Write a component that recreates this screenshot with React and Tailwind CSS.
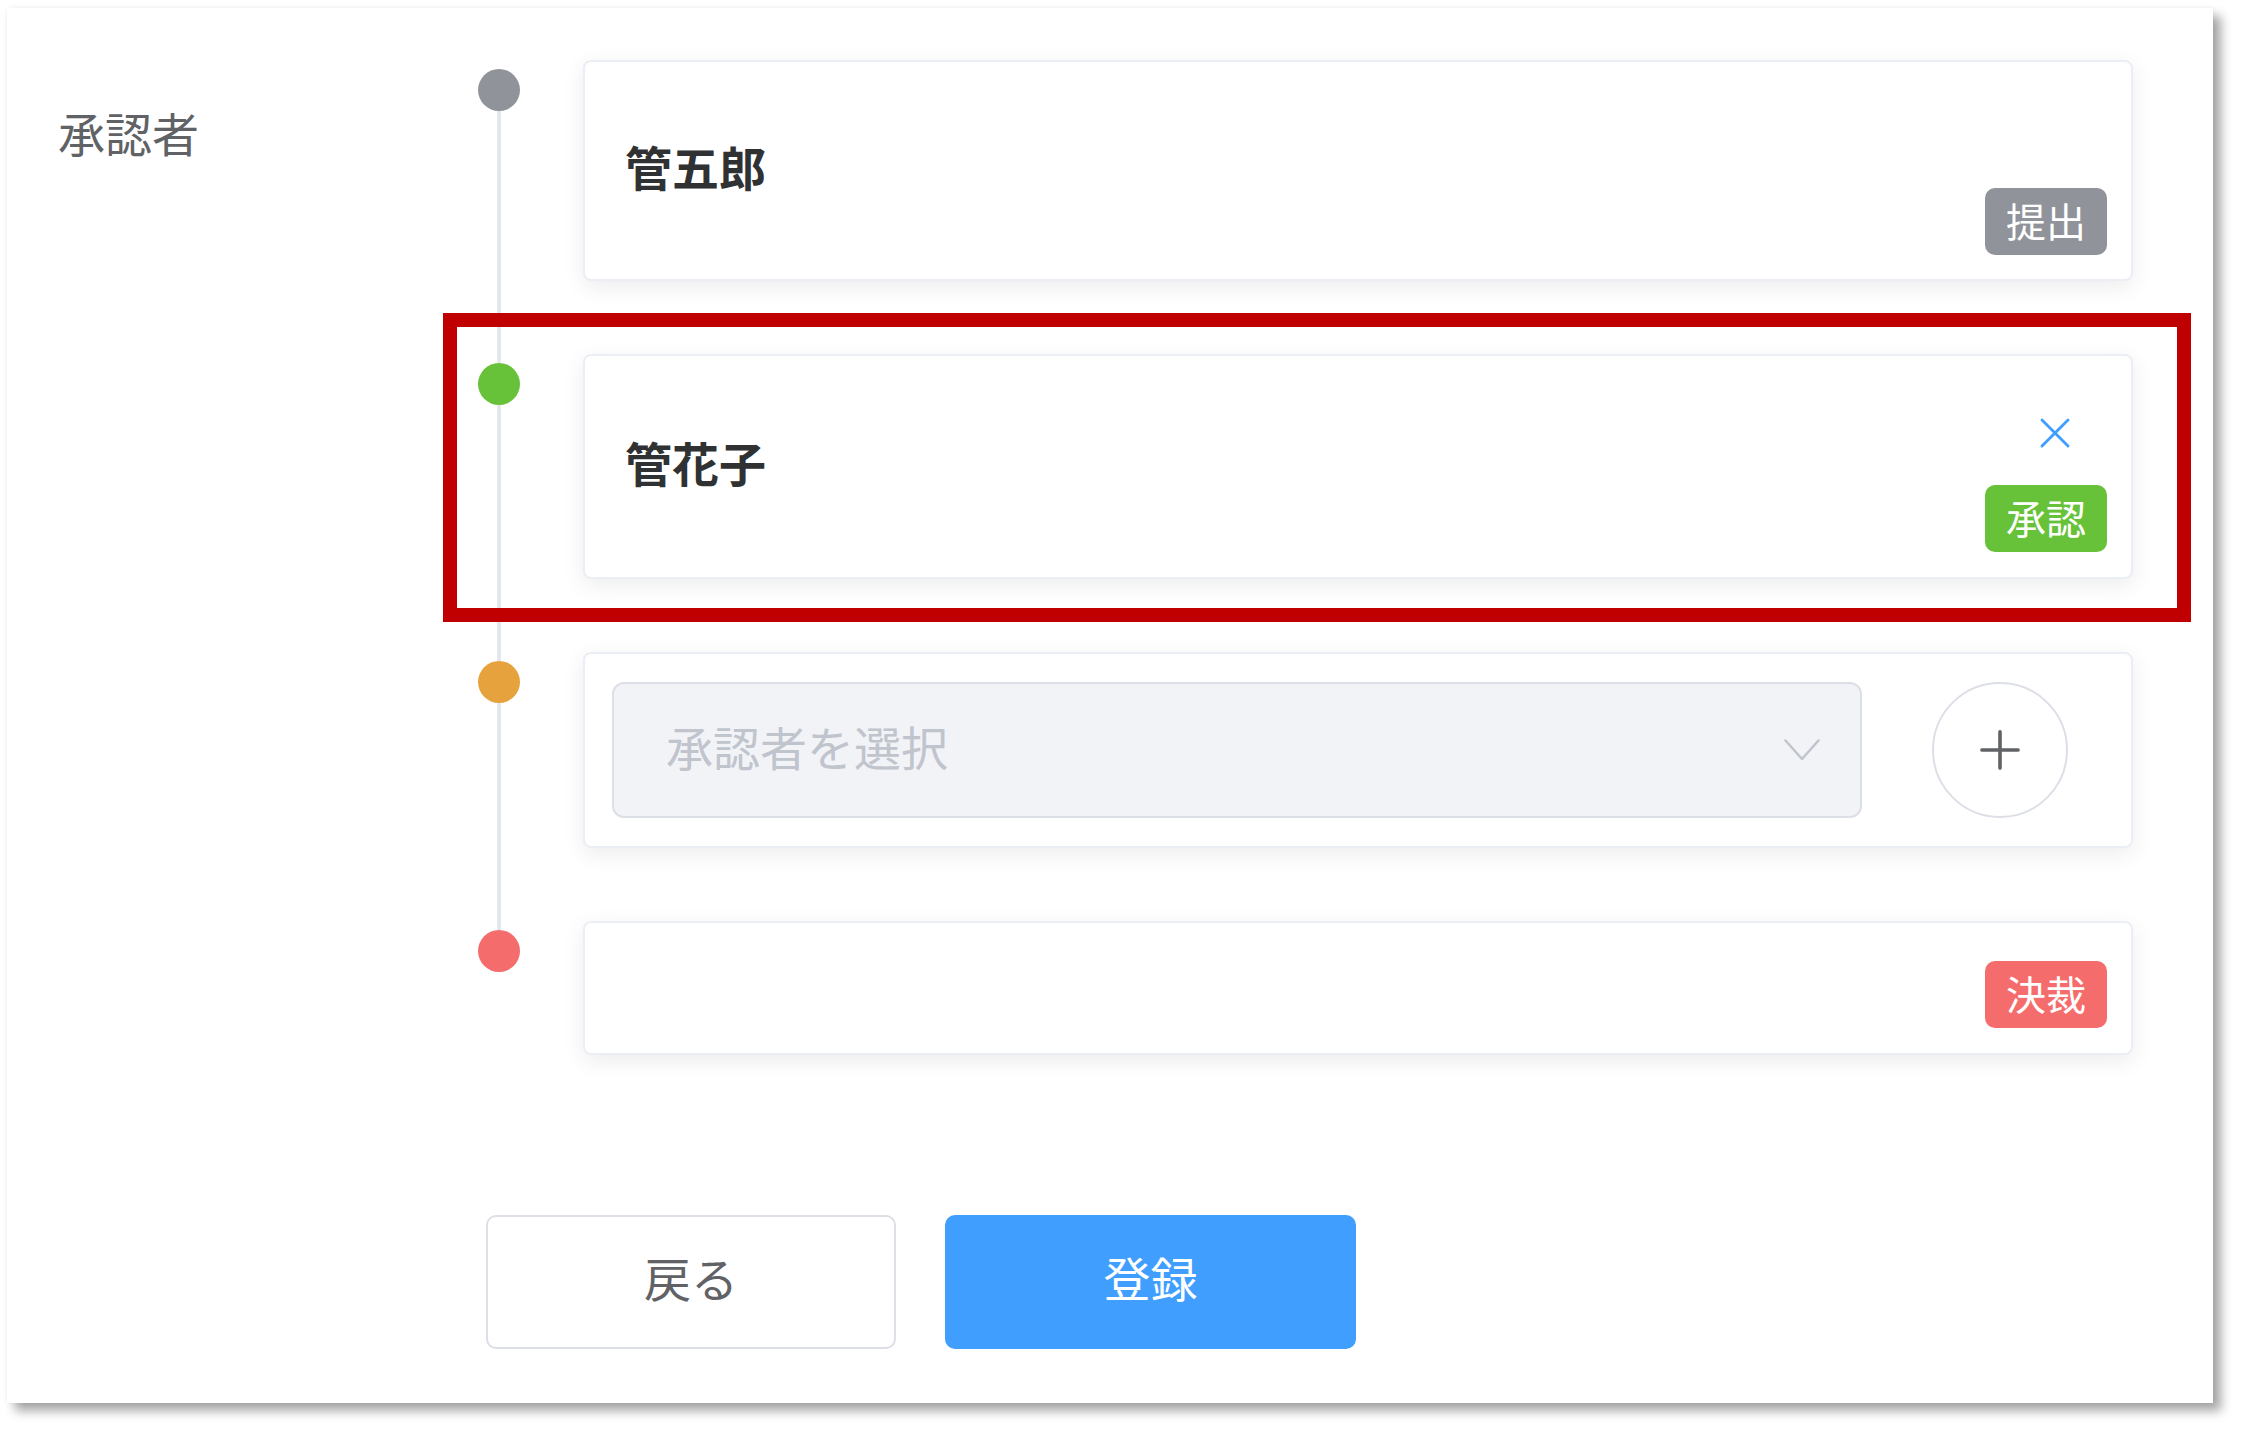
import { X, Plus } from "lucide-react";

const font = { fontFamily: '"Noto Sans CJK JP", "Noto Sans", sans-serif' };

function Badge({ color, children }) {
  return (
    <span
      className={`flex h-[67px] items-center rounded-[10px] px-[21px] pb-[3px] text-[40px] leading-none text-white ${color}`}
    >
      {children}
    </span>
  );
}

function Row({ dot, first, last, children }) {
  return (
    <div className="flex">
      <div className="flex w-[42px] flex-col items-center">
        <div className={`h-[9px] w-[4px] ${first ? "" : "bg-[#e4e7ed]"}`} />
        <div className={`h-[42px] w-[42px] shrink-0 rounded-full ${dot}`} />
        {!last && <div className="w-[4px] flex-1 bg-[#e4e7ed]" />}
      </div>
      <div className={`ml-[63px] flex-1 ${last ? "" : "pb-[73px]"}`}>{children}</div>
    </div>
  );
}

const card =
  "rounded-[8px] border-2 border-[#ebeef5] bg-white shadow-[0_6px_22px_rgba(0,0,0,0.08)]";

export default function App() {
  return (
    <div className="min-h-screen bg-white pt-[8px] pl-[7px]" style={font}>
      <div className="relative h-[1395px] w-[2206px] bg-white shadow-[8px_8px_10px_rgba(0,0,0,0.35),0_0_5px_rgba(0,0,0,0.06)]">
        <div className="flex pt-[52px] pl-[51px]">
          <div className="w-[420px] pt-[48px] text-[47px] leading-[48px] text-[#606266]">
            承認者
          </div>

          <div className="w-[1655px]">
            <Row dot="bg-[#909399]" first>
              <div className={`${card} flex h-[221px] pl-[40px] pr-[24px]`}>
                <div className="flex flex-1 items-center pb-[8px] text-[47px] font-bold text-[#303133]">
                  管五郎
                </div>
                <div className="flex flex-col justify-end pb-[24px]">
                  <Badge color="bg-[#909399]">提出</Badge>
                </div>
              </div>
            </Row>

            <Row dot="bg-[#67c23a]">
              <div className={`${card} flex h-[225px] pl-[40px] pr-[24px]`}>
                <div className="flex flex-1 items-center pb-[8px] text-[47px] font-bold text-[#303133]">
                  管花子
                </div>
                <div className="flex flex-col justify-between pt-[51px] pb-[25px]">
                  <X
                    className="mr-[26px] self-end text-[#409eff]"
                    size={52}
                    strokeWidth={1.3}
                  />
                  <Badge color="bg-[#67c23a]">承認</Badge>
                </div>
              </div>
            </Row>

            <Row dot="bg-[#e6a23c]">
              <div className={`${card} flex h-[196px] items-center gap-[70px] pl-[27px] pr-[63px]`}>
                <div className="flex h-[136px] flex-1 items-center justify-between rounded-[12px] border-2 border-[#dcdfe6] bg-[#f2f3f7] pl-[52px] pr-[40px]">
                  <span className="mb-[8px] text-[47px] text-[#c0c4cc]">承認者を選択</span>
                  <svg width="36" height="22" viewBox="0 0 36 22" fill="none">
                    <path
                      d="M1.5 1.5 L18 20 L34.5 1.5"
                      stroke="#c0c4cc"
                      strokeWidth="2.5"
                      strokeLinejoin="round"
                      strokeLinecap="round"
                    />
                  </svg>
                </div>
                <button className="flex h-[136px] w-[136px] items-center justify-center rounded-full border-2 border-[#dcdfe6] bg-white">
                  <Plus className="text-[#606266]" size={62} strokeWidth={1.4} />
                </button>
              </div>
            </Row>

            <Row dot="bg-[#f56c6c]" last>
              <div className={`${card} flex h-[134px] items-end justify-end pr-[24px] pb-[25px]`}>
                <Badge color="bg-[#f56c6c]">決裁</Badge>
              </div>
            </Row>

            <div className="mt-[160px] ml-[8px] flex gap-[49px]">
              <button className="h-[134px] w-[410px] rounded-[10px] border-2 border-[#dcdfe6] bg-white pb-[10px] text-[47px] text-[#606266]">
                戻る
              </button>
              <button className="h-[134px] w-[411px] rounded-[10px] bg-[#409eff] pb-[10px] text-[47px] text-white">
                登録
              </button>
            </div>
          </div>
        </div>

        {/* annotation frame */}
        <div className="pointer-events-none absolute top-[305px] left-[436px] h-[309px] w-[1748px] border-[14px] border-[#c00000]" />
      </div>
    </div>
  );
}
